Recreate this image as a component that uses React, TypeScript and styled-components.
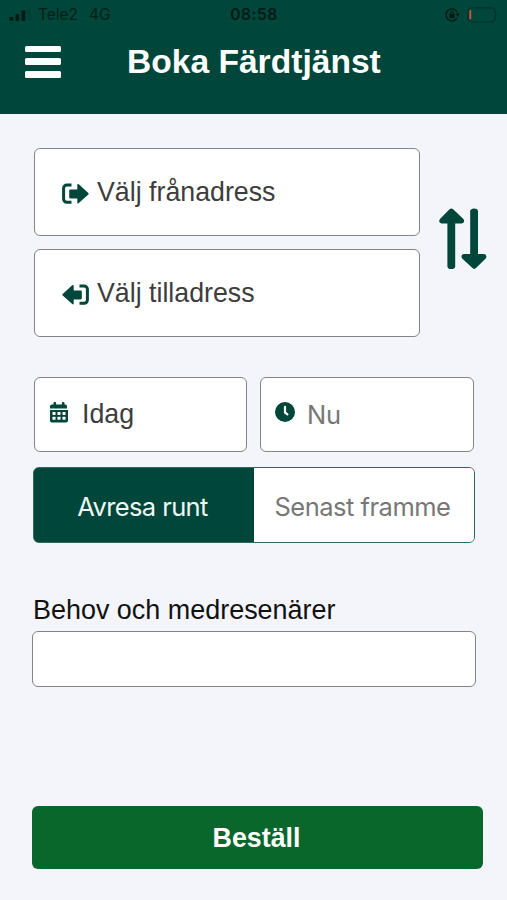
import React from "react";
import styled, { createGlobalStyle } from "styled-components";

const green = "#00463a";

const GlobalStyle = createGlobalStyle`
  * { box-sizing: border-box; }
  body { margin: 0; background: #f3f5fa; font-family: "Liberation Sans", Arial, sans-serif; }
  button { font: inherit; padding: 0; margin: 0; cursor: pointer; }
`;

const Screen = styled.div`
  width: 507px;
  height: 900px;
  overflow: hidden;
  background: #f3f5fa;
`;

const Header = styled.header`
  height: 114px;
  background: ${green};
`;

const StatusBar = styled.div`
  height: 30px;
  padding: 0 8px 0 9px;
  display: grid;
  grid-template-columns: 1fr auto 1fr;
  align-items: center;
  font-family: Inter, sans-serif;
  font-size: 15.5px;
  line-height: 30px;
  color: #002019;
`;

const Carrier = styled.div`
  display: flex;
  align-items: center;
  gap: 7px;
  white-space: pre;
`;

const Network = styled.span`
  margin-left: 4px;
`;

const Time = styled.div`
  font-weight: 600;
  color: #001b15;
  letter-spacing: 0.55px;
`;

const Indicators = styled.div`
  display: flex;
  justify-content: flex-end;
  align-items: center;
  gap: 7px;
`;

const TitleBar = styled.div`
  display: grid;
  grid-template-columns: 103px 1fr;
  align-items: center;
  height: 63px;
  padding-left: 25px;
`;

const MenuButton = styled.button`
  width: 36px;
  height: 32px;
  border: 0;
  background: none;
  display: flex;
  flex-direction: column;
  justify-content: space-between;
`;

const MenuLine = styled.span`
  display: block;
  width: 36px;
  height: 6.6px;
  border-radius: 1.5px;
  background: #fff;
`;

const Title = styled.h1`
  margin: 0 0 0 -1px;
  color: #fff;
  font-size: 33.6px;
  line-height: 40px;
  white-space: nowrap;
`;

const Form = styled.main`
  padding: 34px 32px 0;
`;

const Route = styled.section`
  display: flex;
  align-items: center;
  gap: 20px;
  margin-left: 2px;
  width: 456px;
`;

const Addresses = styled.div`
  display: flex;
  flex-direction: column;
  gap: 13px;
`;

const Field = styled.button<{ $w: number; $h: number; $pad: number; $muted?: boolean }>`
  display: flex;
  align-items: center;
  width: ${(p) => p.$w}px;
  height: ${(p) => p.$h}px;
  padding-left: ${(p) => p.$pad}px;
  border: 1px solid #828486;
  border-radius: 6px;
  background: #fff;
  color: ${(p) => (p.$muted ? "#777" : "#3d3d3d")};
  font-size: 26.75px;
`;

const FieldText = styled.span<{ $gap: number; $sans?: boolean; $lift?: number }>`
  margin-left: ${(p) => p.$gap}px;
  margin-bottom: ${(p) => p.$lift ?? 0}px;
  line-height: 30px;
  white-space: nowrap;
  ${(p) => p.$sans && `font-family: Inter, sans-serif; font-size: 25.5px; letter-spacing: -0.3px;`}
`;

const SwapButton = styled.button`
  width: 48px;
  height: 62px;
  border: 0;
  background: none;
  margin-top: -8px;
  margin-left: -1px;
  svg { display: block; }
`;

const When = styled.section`
  display: flex;
  gap: 13px;
  margin: 40px 0 0 2px;
`;

const CalendarIcon = styled.svg`
  width: 18px;
  height: 21px;
  flex: none;
  margin-top: -5px;
`;

const ClockIcon = styled.svg`
  width: 20px;
  height: 20px;
  flex: none;
  margin-top: -5px;
`;

const ArrowIcon = styled.svg`
  width: 27px;
  height: 22px;
  flex: none;
  margin-top: 4px;
`;

const Segments = styled.section`
  display: grid;
  grid-template-columns: 220px 1fr;
  width: 442px;
  height: 76px;
  margin: 15px 0 0 1px;
  border: 1.5px solid #2c6b5c;
  border-radius: 6px;
  overflow: hidden;
  background: linear-gradient(to right, ${green} 50%, #fff 50%);
`;

const Segment = styled.button<{ $active?: boolean }>`
  border: 0;
  background: ${(p) => (p.$active ? green : "#fff")};
  color: ${(p) => (p.$active ? "#eef8f4" : "#777")};
  font-family: Inter, sans-serif;
  font-size: 25.5px;
  line-height: 32px;
  letter-spacing: ${(p) => (p.$active ? -0.6 : -0.5)}px;
  padding: 3px 3px 0 0;
  white-space: nowrap;
`;

const Label = styled.label`
  display: block;
  margin: 51px 0 0 1px;
  font-size: 26.95px;
  line-height: 32px;
  color: #111;
  white-space: nowrap;
`;

const NeedsInput = styled.input`
  display: block;
  width: 444px;
  height: 56px;
  margin-top: 5px;
  padding: 0 12px;
  border: 1px solid #828486;
  border-radius: 6px;
  background: #fff;
  font: inherit;
`;

const Submit = styled.button`
  display: block;
  width: 451px;
  height: 63px;
  margin-top: 119px;
  padding: 2px 2px 0 0;
  border: 0;
  border-radius: 6px;
  background: #0a672b;
  color: #fff;
  font-size: 26.8px;
  font-weight: 700;
`;

const Signal = () => (
  <svg width="22" height="12" viewBox="0 0 22 12" fill="#001b15">
    <rect x="0.5" y="8" width="3.8" height="4" rx="0.8" />
    <rect x="6.5" y="5" width="3.8" height="7" rx="0.8" />
    <rect x="12.5" y="1.5" width="3.8" height="10.5" rx="0.8" />
    <rect x="18.2" y="0" width="3.4" height="12" rx="0.8" opacity="0.15" />
  </svg>
);

const RotationLock = () => (
  <svg width="15" height="14" viewBox="0 0 15 14" fill="none" stroke="#001b15" strokeWidth="1.4">
    <path d="M12 3.6A6 6 0 1 0 12 10.2" />
    <path d="M10.9 5.2h3.7l-1.7 3.9z" fill="#001b15" stroke="none" />
    <rect x="4.4" y="6" width="5.2" height="4.2" rx="0.6" fill="#001b15" stroke="none" />
    <path d="M5.6 6.5V5a1.4 1.4 0 0 1 2.8 0v1.5" strokeWidth="1" />
  </svg>
);

const Battery = () => (
  <svg width="32" height="16" viewBox="0 0 32 16" fill="none">
    <rect x="0.8" y="0.8" width="27.4" height="14" rx="4" stroke="#00332a" strokeWidth="1.3" />
    <rect x="2.4" y="3" width="1.8" height="9.4" rx="0.9" fill="#d8513c" />
    <path d="M29.8 5.7q1.6 2 0 4.3z" fill="#00332a" />
  </svg>
);

const FromIcon = () => (
  <ArrowIcon viewBox="0 0 27 22">
    <path d="M9.5 2.1H4.8a3.2 3.2 0 0 0-3.2 3.2v10.8a3.2 3.2 0 0 0 3.2 3.2h4.7" fill="none" stroke={green} strokeWidth="3" />
    <path d="M8.3 6.5h7V2q0-1.8 1.5-.7l9.5 8.6q.8.8 0 1.6l-9.5 8.6q-1.5 1.1-1.5-.7v-4h-7q-1.1 0-1.1-1.1V7.6q0-1.1 1.1-1.1z" fill={green} />
  </ArrowIcon>
);

const ToIcon = () => (
  <ArrowIcon viewBox="0 0 27 22">
    <path d="M17.5 2.1h4.7a3.2 3.2 0 0 1 3.2 3.2v10.8a3.2 3.2 0 0 1-3.2 3.2h-4.7" fill="none" stroke={green} strokeWidth="3" />
    <path d="M18.7 6.5h-7V2q0-1.8-1.5-.7L.7 9.9q-.8.8 0 1.6l9.5 8.6q1.5 1.1 1.5-.7v-4h7q1.1 0 1.1-1.1V7.6q0-1.1-1.1-1.1z" fill={green} />
  </ArrowIcon>
);

const cells = [2.5, 7.5, 12.5];

const Calendar = () => (
  <CalendarIcon viewBox="0 0 18 21" fill={green}>
    <path d="M0 6.4V4.3q0-1.9 1.9-1.9h1.6V1q0-1 1-1h.6q1 0 1 1v1.4h5.8V1q0-1 1-1h.6q1 0 1 1v1.4h.6q1.9 0 1.9 1.9v2.1z" />
    <path d="M0 7.9h18v10.7q0 1.9-1.9 1.9H1.9Q0 20.5 0 18.6z" />
    {cells.map((x) => [10, 14.8].map((y) => <rect key={`${x}-${y}`} x={x} y={y} width="3" height="3" rx="0.4" fill="#fff" />))}
  </CalendarIcon>
);

const Clock = () => (
  <ClockIcon viewBox="0 0 20 20">
    <circle cx="10" cy="10" r="10" fill={green} />
    <path d="M10 4.9v5.6l2.4 1.8" fill="none" stroke="#fff" strokeWidth="2.2" strokeLinecap="round" strokeLinejoin="round" />
  </ClockIcon>
);

const SwapArrows = () => (
  <svg width="48" height="62" viewBox="0 0 48 62" fill={green}>
    <path d="M10.5 1.3q1.8-1.6 3.6 0l10.3 9.8q2.1 3.2-1.5 4.4H16.2v43q-.4 2.6-3.9 2.6t-3.9-2.6v-43H2.5q-3.7-1-1.5-4.4z" />
    <path d="M37 60.1q-1.8 1.6-3.6 0L23.2 50.5q-2.1-3.3 1.5-4.4h6.5v-43q.4-2.6 3.9-2.6t3.9 2.6v43h6.2q3.4 1.1 1.5 4.4z" />
  </svg>
);

export default function App() {
  return (
    <Screen>
      <GlobalStyle />
      <Header>
        <StatusBar>
          <Carrier><Signal /><span>Tele2</span><Network>4G</Network></Carrier>
          <Time>08:58</Time>
          <Indicators><RotationLock /><Battery /></Indicators>
        </StatusBar>
        <TitleBar>
          <MenuButton aria-label="Meny"><MenuLine /><MenuLine /><MenuLine /></MenuButton>
          <Title>Boka Färdtjänst</Title>
        </TitleBar>
      </Header>
      <Form>
        <Route>
          <Addresses>
            <Field $w={386} $h={88} $pad={27}><FromIcon /><FieldText $gap={8}>Välj frånadress</FieldText></Field>
            <Field $w={386} $h={88} $pad={27}><ToIcon /><FieldText $gap={8}>Välj tilladress</FieldText></Field>
          </Addresses>
          <SwapButton aria-label="Byt riktning"><SwapArrows /></SwapButton>
        </Route>
        <When>
          <Field $w={213} $h={75} $pad={15}><Calendar /><FieldText $gap={14} $lift={2}>Idag</FieldText></Field>
          <Field $w={214} $h={75} $pad={14} $muted><Clock /><FieldText $gap={12} $sans>Nu</FieldText></Field>
        </When>
        <Segments>
          <Segment $active>Avresa runt</Segment>
          <Segment>Senast framme</Segment>
        </Segments>
        <Label htmlFor="needs">Behov och medresenärer</Label>
        <NeedsInput id="needs" />
        <Submit>Beställ</Submit>
      </Form>
    </Screen>
  );
}
